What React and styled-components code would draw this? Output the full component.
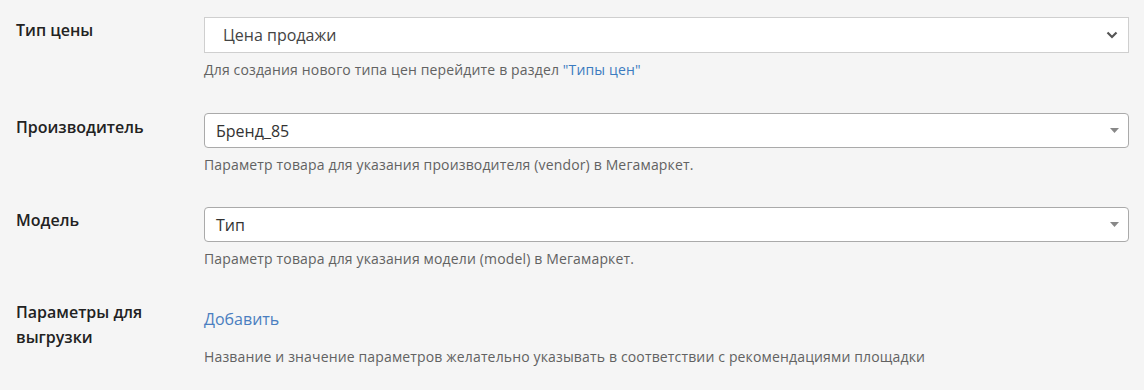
import React from 'react';
import styled, { createGlobalStyle } from 'styled-components';

const GlobalStyle = createGlobalStyle`
    html, body {
        margin: 0;
        padding: 0;
        background: #f5f5f5;
    }
    body {
        font-family: "Open Sans", "Noto Sans", sans-serif;
        color: #222;
    }
`;

const Form = styled.div`
    width: 1144px;
    min-height: 390px;
    background: #f5f5f5;
    box-sizing: border-box;
`;

const Row = styled.div`
    display: grid;
    grid-template-columns: 188px 1fr;
    padding: ${p => p.top || 17}px 15px 17px 16px;
`;

const Label = styled.div`
    font-size: 16px;
    line-height: 25px;
    font-weight: 600;
    color: #222;
    padding-top: ${p => p.offset || 0}px;
`;

const Field = styled.div`
    display: flex;
    flex-direction: column;
`;

const SelectBox = styled.div`
    display: flex;
    align-items: center;
    justify-content: space-between;
    box-sizing: border-box;
    height: ${p => (p.native ? 36 : 35)}px;
    padding: 0 ${p => (p.native ? 10 : 9)}px 0 ${p => (p.native ? 18 : 11)}px;
    background: #fff;
    border: 1px solid ${p => (p.native ? '#cfcfcf' : '#aaa')};
    border-radius: ${p => (p.native ? 0 : 4)}px;
    font-size: 16px;
    color: ${p => (p.native ? '#444' : '#333')};
`;

const Help = styled.div`
    margin-top: ${p => p.gap || 8}px;
    font-size: 14px;
    line-height: 18px;
    color: #626262;
    letter-spacing: 0.15px;
`;

const Link = styled.a`
    color: #3b7bc0;
    text-decoration: none;
    cursor: pointer;
`;

const AddLink = styled.a`
    display: block;
    font-size: 16px;
    line-height: 25px;
    padding-top: 7px;
    color: #4a7ec0;
    text-decoration: none;
    cursor: pointer;
`;

const Chevron = () => (
    <svg width="12" height="8" viewBox="0 0 12 8">
        <path d="M1.5 1.5 L6 6 L10.5 1.5" fill="none" stroke="#555" strokeWidth="2.2" />
    </svg>
);

const Caret = () => (
    <svg width="9" height="5" viewBox="0 0 9 5">
        <path d="M0 0 L9 0 L4.5 5 Z" fill="#888" />
    </svg>
);

const App = () => {
    return (
        <Form>
            <GlobalStyle />
            <Row>
                <Label offset={1}>Тип цены</Label>
                <Field>
                    <SelectBox native>
                        <span>Цена продажи</span>
                        <Chevron />
                    </SelectBox>
                    <Help>
                        Для создания нового типа цен перейдите в раздел <Link>"Типы цен"</Link>
                    </Help>
                </Field>
            </Row>
            <Row>
                <Label offset={2}>Производитель</Label>
                <Field>
                    <SelectBox>
                        <span>Бренд_85</span>
                        <Caret />
                    </SelectBox>
                    <Help>Параметр товара для указания производителя (vendor) в Мегамаркет.</Help>
                </Field>
            </Row>
            <Row top={16}>
                <Label offset={1}>Модель</Label>
                <Field>
                    <SelectBox>
                        <span>Тип</span>
                        <Caret />
                    </SelectBox>
                    <Help>Параметр товара для указания модели (model) в Мегамаркет.</Help>
                </Field>
            </Row>
            <Row top={15}>
                <Label>
                    Параметры для
                    <br />
                    выгрузки
                </Label>
                <Field>
                    <AddLink>Добавить</AddLink>
                    <Help gap={16}>Название и значение параметров желательно указывать в соответствии с рекомендациями площадки</Help>
                </Field>
            </Row>
        </Form>
    );
};

export default App;
